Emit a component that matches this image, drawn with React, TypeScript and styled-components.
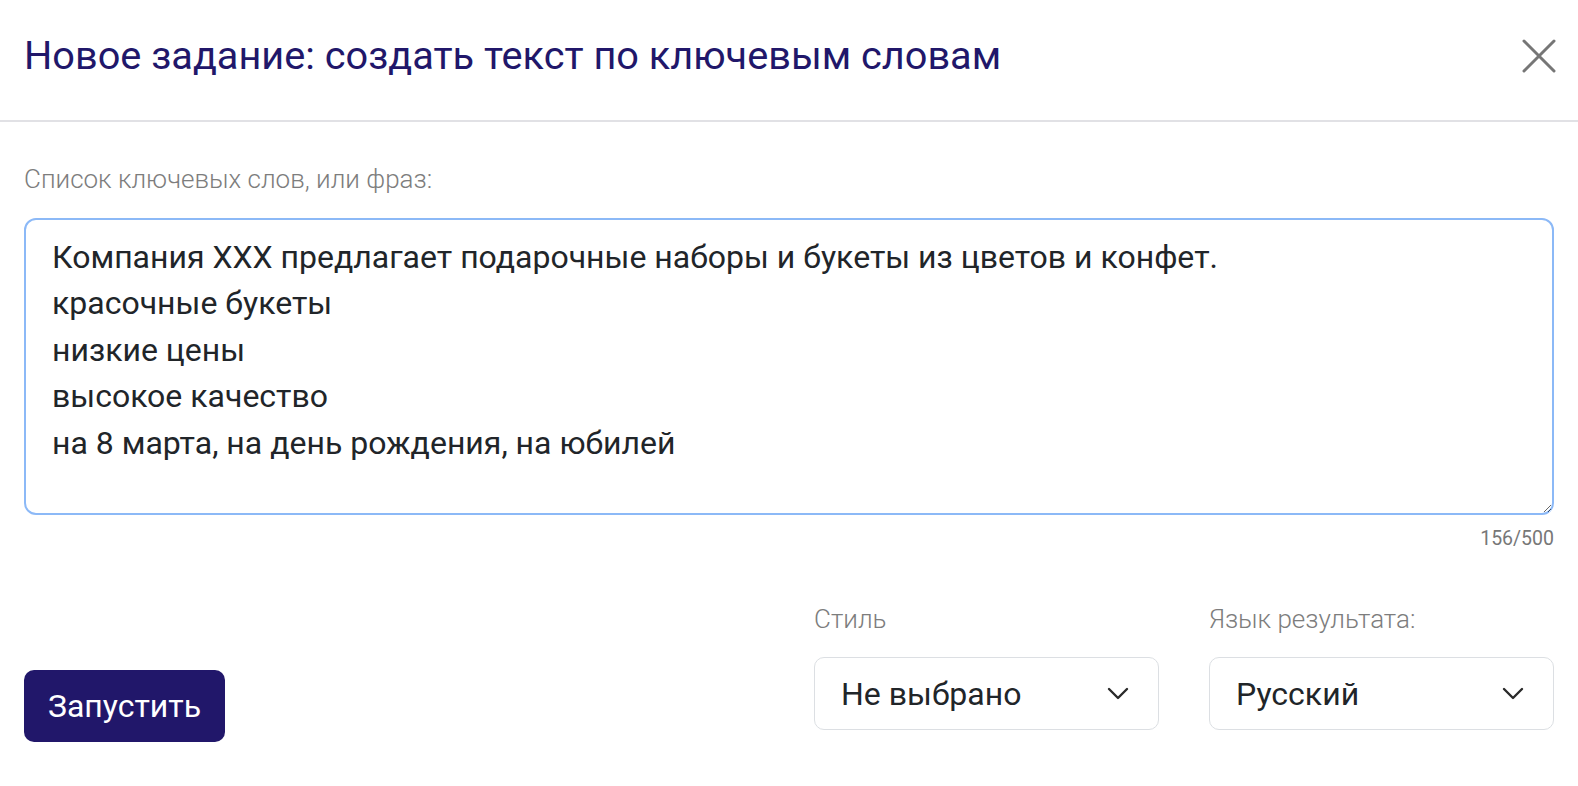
import React from 'react';
import styled, { createGlobalStyle } from 'styled-components';

const GlobalStyle = createGlobalStyle`
  html, body {
    margin: 0;
    padding: 0;
    background: #fff;
    font-family: Roboto, "Liberation Sans", sans-serif;
  }
  * {
    box-sizing: border-box;
  }
`;

const Modal = styled.div`
  width: 1578px;
  height: 786px;
  background: #fff;
  display: flex;
  flex-direction: column;
`;

const Header = styled.div`
  height: 122px;
  padding: 0 22px 8px 24px;
  display: flex;
  align-items: center;
  justify-content: space-between;
  border-bottom: 2px solid #e1e1e5;
`;

const Title = styled.h1`
  margin: 0;
  font-size: 39.7px;
  line-height: 46px;
  font-weight: 400;
  color: #21176a;
`;

const CloseButton = styled.button`
  width: 34px;
  height: 34px;
  padding: 0;
  border: none;
  background: none;
  cursor: pointer;
  display: flex;
  align-items: center;
  justify-content: center;
`;

const Body = styled.div`
  padding: 42px 24px 0;
  display: flex;
  flex-direction: column;
`;

const FieldLabel = styled.label`
  display: block;
  font-size: 26px;
  font-weight: 300;
  color: #7d7d7d;
  line-height: 30px;
`;

const KeywordsArea = styled.textarea`
  margin-top: 24px;
  width: 100%;
  height: 297px;
  padding: 14px 26px;
  border: 2px solid #8cb9f7;
  border-radius: 12px;
  outline: none;
  resize: vertical;
  font-family: Roboto, "Liberation Sans", sans-serif;
  font-size: 32px;
  line-height: 46.4px;
  color: #212529;
`;

const Counter = styled.div`
  margin-top: 13px;
  text-align: right;
  font-size: 19.5px;
  color: #777;
  line-height: 22px;
`;

const Footer = styled.div`
  margin-top: 54px;
  display: flex;
  align-items: flex-end;
  justify-content: space-between;
`;

const RunButton = styled.button`
  width: 201px;
  height: 72px;
  border: none;
  border-radius: 10px;
  background: #21176a;
  color: #fff;
  font-family: Roboto, "Liberation Sans", sans-serif;
  font-size: 32px;
  font-weight: 400;
  cursor: pointer;
`;

const Selects = styled.div`
  display: flex;
  gap: 50px;
  padding-bottom: 12px;
`;

const SelectField = styled.div`
  width: 345px;
  display: flex;
  flex-direction: column;
  gap: 23px;
`;

const SelectBox = styled.div`
  height: 73px;
  border: 1.5px solid #dcdfe3;
  border-radius: 10px;
  padding: 0 29px 0 26px;
  display: flex;
  align-items: center;
  justify-content: space-between;
  font-size: 32px;
  color: #212529;
  cursor: pointer;
`;

const CloseIcon = () => (
  <svg width="34" height="34" viewBox="0 0 34 34" fill="none">
    <path d="M2 2L32 32M32 2L2 32" stroke="#767676" strokeWidth="3" strokeLinecap="round" />
  </svg>
);

const Chevron = () => (
  <svg width="22" height="13" viewBox="0 0 22 13" fill="none">
    <path d="M2 2L11 11L20 2" stroke="#2a2a2a" strokeWidth="2.4" strokeLinecap="round" strokeLinejoin="round" />
  </svg>
);

const keywords = [
  'Компания XXX предлагает подарочные наборы и букеты из цветов и конфет.',
  'красочные букеты',
  'низкие цены',
  'высокое качество',
  'на 8 марта, на день рождения, на юбилей',
].join('\n');

const selects = [
  { label: 'Стиль', value: 'Не выбрано' },
  { label: 'Язык результата:', value: 'Русский' },
];

const App: React.FC = () => {
  return (
    <>
      <GlobalStyle />
      <Modal>
        <Header>
          <Title>Новое задание: создать текст по ключевым словам</Title>
          <CloseButton aria-label="Закрыть">
            <CloseIcon />
          </CloseButton>
        </Header>

        <Body>
          <FieldLabel>Список ключевых слов, или фраз:</FieldLabel>
          <KeywordsArea defaultValue={keywords} spellCheck={false} />
          <Counter>{keywords.length}/500</Counter>

          <Footer>
            <RunButton>Запустить</RunButton>
            <Selects>
              {selects.map((s) => (
                <SelectField key={s.label}>
                  <FieldLabel>{s.label}</FieldLabel>
                  <SelectBox>
                    {s.value}
                    <Chevron />
                  </SelectBox>
                </SelectField>
              ))}
            </Selects>
          </Footer>
        </Body>
      </Modal>
    </>
  );
};

export default App;
